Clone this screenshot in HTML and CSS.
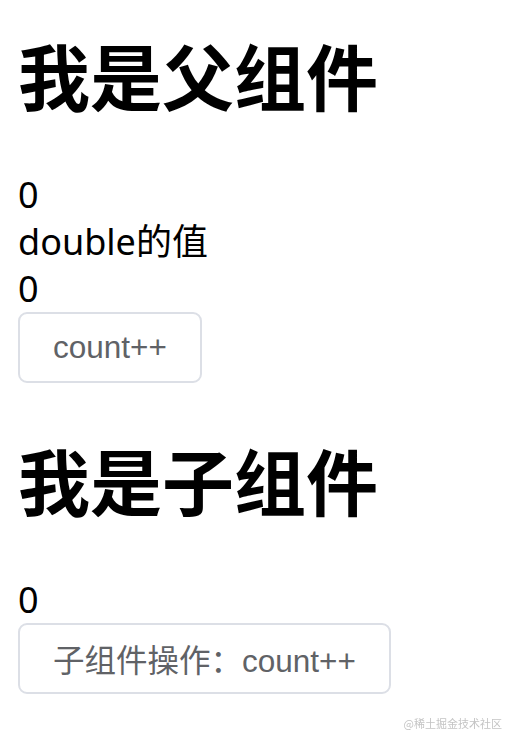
FILE: index.html
```html
<!DOCTYPE html>
<html lang="zh-CN">
<head>
<meta charset="UTF-8" />
<meta name="viewport" content="width=device-width, initial-scale=1" />
<title>父子组件</title>
<link rel="stylesheet" href="styles.css">
</head>
<body>
  <div class="page">
    <!-- 父组件 -->
    <section class="block">
      <h1>我是父组件</h1>
      <div class="line">0</div>
      <div class="line">double的值</div>
      <div class="line">0</div>
      <button type="button" class="el-button">count++</button>
    </section>

    <!-- 子组件 -->
    <section class="block">
      <h1>我是子组件</h1>
      <div class="line">0</div>
      <button type="button" class="el-button">子组件操作：count++</button>
    </section>
  </div>

  <div class="watermark">@稀土掘金技术社区</div>
</body>
</html>
```

FILE: styles.css
```css
*, *:before, *:after {
  box-sizing: border-box;
}

body {
  margin: 0;
  background: #fff;
  color: #000;
  font-family: "Noto Sans", "Noto Sans CJK SC", sans-serif;
  font-size: 36px;
}

.page {
  padding: 38px 18px 0;
}

.block + .block {
  margin-top: 60px;
}

h1 {
  margin: 0 0 61px;
  font-family: "Noto Sans CJK SC", sans-serif;
  font-size: 72px;
  line-height: 72px;
  font-weight: 700;
}

.line {
  height: 47px;
  line-height: 47px;
  white-space: nowrap;
}

/* element-plus 默认按钮 */
.el-button {
  display: flex;
  align-items: center;
  justify-content: center;
  height: 71px;
  margin-top: 0;
  padding: 0 33px 1px;
  background: #fff;
  border: 2px solid #dcdfe6;
  border-radius: 9px;
  color: #606266;
  font-family: "Liberation Sans", "Noto Sans CJK SC", sans-serif;
  font-size: 31.5px;
  cursor: pointer;
}

.watermark {
  position: fixed;
  right: 5px;
  bottom: 4px;
  font-family: "Noto Sans CJK SC", sans-serif;
  font-size: 11px;
  color: #c4c4c4;
}
```
